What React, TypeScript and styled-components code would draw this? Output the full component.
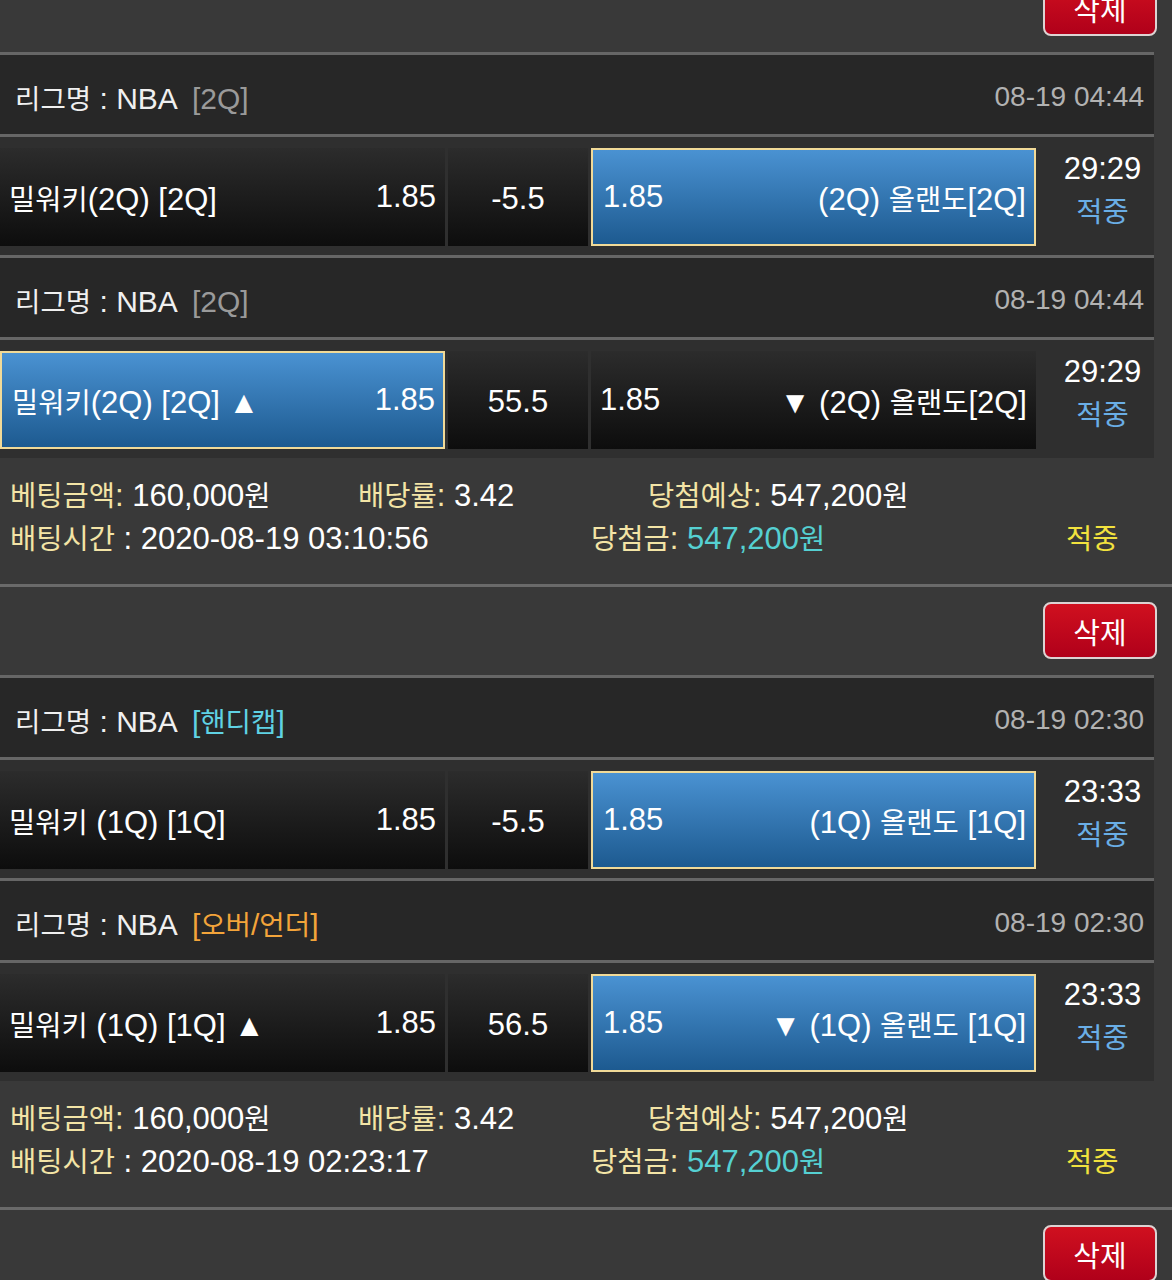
import React, { FC } from 'react';
import styled, { createGlobalStyle } from 'styled-components';

const GlobalStyle = createGlobalStyle`
    html, body {
        margin: 0;
        padding: 0;
        background: #393939;
    }
    body {
        font-family: 'Liberation Sans', 'Noto Sans CJK KR', Arial, sans-serif;
        color: #f2f2f2;
    }
`;

type Tone = 'gray' | 'cyan' | 'orange';

interface ISide {
    name: string;
    odds: string;
    selected?: boolean;
}

interface IGame {
    tag: string;
    tone: Tone;
    date: string;
    home: ISide;
    line: string;
    away: ISide;
    clock: string;
}

interface IBet {
    games: IGame[];
    amount: string;
    rate: string;
    expected: string;
    time: string;
    won: string;
}

const toneColors: Record<Tone, string> = {
    gray: '#9a9a9a',
    cyan: '#5fd2e4',
    orange: '#f3a43a',
};

const Hangul = styled.span`
    font-size: 0.92em;
`;

const Ko: FC<{ text: string }> = ({ text }) => (
    <>
        {text
            .split(/([\uAC00-\uD7A3]+)/)
            .map((part, i) => (i % 2 ? <Hangul key={i}>{part}</Hangul> : part))}
    </>
);

const Page = styled.div`
    margin-top: -36px;
    overflow: hidden;
`;

const DeleteBar = styled.div`
    display: flex;
    justify-content: flex-end;
    padding: 15px 15px 16px;
`;

const DeleteButton = styled.button`
    width: 114px;
    height: 57px;
    border: 2px solid #ddd3d3;
    border-radius: 8px;
    background: linear-gradient(#d0101f, #b0001a);
    color: #ffffff;
    font-family: inherit;
    font-size: 29px;
    padding: 0;
    cursor: pointer;
`;

const FullLine = styled.div`
    height: 3px;
    background: #6a6a6a;
`;

const BetBox = styled.div`
    width: 1154px;
`;

const GameHeader = styled.div`
    display: flex;
    align-items: center;
    justify-content: space-between;
    height: 82px;
    padding: 4px 10px 0 15px;
    box-sizing: border-box;
    border-top: 3px solid #666666;
    background: #272727;
    font-size: 30px;
`;

const League = styled.span`
    color: #f0f0f0;
`;

const Tag = styled.span<{ $tone: Tone }>`
    margin-left: 14px;
    color: ${({ $tone }) => toneColors[$tone]};
`;

const DateText = styled.span`
    font-size: 28px;
    color: #b2b2b2;
`;

const MatchRow = styled.div`
    display: grid;
    grid-template-columns: 445px 140px 445px 1fr;
    column-gap: 3px;
    padding: 11px 0 9px;
    border-top: 3px solid #666666;
    background: #2f2f2f;
`;

const Pick = styled.div<{ $selected?: boolean }>`
    display: flex;
    align-items: center;
    justify-content: space-between;
    height: 98px;
    box-sizing: border-box;
    padding: ${({ $selected }) => ($selected ? '0 8px 0 10px' : '0 9px')};
    font-size: 31px;
    color: #ffffff;
    white-space: nowrap;
    border: ${({ $selected }) => ($selected ? '2px solid #f1da98' : 'none')};
    background: ${({ $selected }) =>
        $selected
            ? 'linear-gradient(#4a92d2, #1d5a90)'
            : 'linear-gradient(#2c2c2c, #0d0d0d)'};
`;

const LineCell = styled.div`
    display: flex;
    align-items: center;
    justify-content: center;
    height: 98px;
    padding-top: 4px;
    box-sizing: border-box;
    font-size: 31px;
    color: #ffffff;
    background: linear-gradient(#2c2c2c, #0d0d0d);
`;

const TimeCell = styled.div`
    display: flex;
    flex-direction: column;
    align-items: center;
    justify-content: center;
    height: 98px;
    padding: 0 0 14px 12px;
    box-sizing: border-box;
    font-size: 31px;
    line-height: 43px;
`;

const Clock = styled.span`
    color: #ffffff;
`;

const Hit = styled.span<{ $color: string }>`
    color: ${({ $color }) => $color};
`;

const Info = styled.div`
    padding: 14px 0 26px 10px;
    font-size: 31px;
`;

const InfoRow = styled.div`
    display: flex;
    align-items: center;
    height: 43px;
    white-space: nowrap;
`;

const InfoItem = styled.div<{ $width?: number }>`
    ${({ $width }) => ($width ? `width: ${$width}px;` : 'flex: 1;')}
`;

const Label = styled.span`
    color: #f3e4a6;
`;

const Value = styled.span<{ $cyan?: boolean }>`
    color: ${({ $cyan }) => ($cyan ? '#55d0d2' : '#ffffff')};
`;

const bets: IBet[] = [
    {
        games: [
            {
                tag: '[2Q]',
                tone: 'gray',
                date: '08-19 04:44',
                home: { name: '밀워키(2Q) [2Q]', odds: '1.85' },
                line: '-5.5',
                away: { name: '(2Q) 올랜도[2Q]', odds: '1.85', selected: true },
                clock: '29:29',
            },
            {
                tag: '[2Q]',
                tone: 'gray',
                date: '08-19 04:44',
                home: { name: '밀워키(2Q) [2Q] ▲', odds: '1.85', selected: true },
                line: '55.5',
                away: { name: '▼ (2Q) 올랜도[2Q]', odds: '1.85' },
                clock: '29:29',
            },
        ],
        amount: '160,000원',
        rate: '3.42',
        expected: '547,200원',
        time: '2020-08-19 03:10:56',
        won: '547,200원',
    },
    {
        games: [
            {
                tag: '[핸디캡]',
                tone: 'cyan',
                date: '08-19 02:30',
                home: { name: '밀워키 (1Q) [1Q]', odds: '1.85' },
                line: '-5.5',
                away: { name: '(1Q) 올랜도 [1Q]', odds: '1.85', selected: true },
                clock: '23:33',
            },
            {
                tag: '[오버/언더]',
                tone: 'orange',
                date: '08-19 02:30',
                home: { name: '밀워키 (1Q) [1Q] ▲', odds: '1.85' },
                line: '56.5',
                away: { name: '▼ (1Q) 올랜도 [1Q]', odds: '1.85', selected: true },
                clock: '23:33',
            },
        ],
        amount: '160,000원',
        rate: '3.42',
        expected: '547,200원',
        time: '2020-08-19 02:23:17',
        won: '547,200원',
    },
];

const Delete: FC = () => (
    <DeleteBar>
        <DeleteButton>삭제</DeleteButton>
    </DeleteBar>
);

const Game: FC<{ game: IGame }> = ({ game }) => (
    <>
        <GameHeader>
            <span>
                <League>
                    <Ko text="리그명 : NBA" />
                </League>
                <Tag $tone={game.tone}>
                    <Ko text={game.tag} />
                </Tag>
            </span>
            <DateText>{game.date}</DateText>
        </GameHeader>
        <MatchRow>
            <Pick $selected={game.home.selected}>
                <span>
                    <Ko text={game.home.name} />
                </span>
                <span>{game.home.odds}</span>
            </Pick>
            <LineCell>{game.line}</LineCell>
            <Pick $selected={game.away.selected}>
                <span>{game.away.odds}</span>
                <span>
                    <Ko text={game.away.name} />
                </span>
            </Pick>
            <TimeCell>
                <Clock>{game.clock}</Clock>
                <Hit $color="#6aaee6">
                    <Ko text="적중" />
                </Hit>
            </TimeCell>
        </MatchRow>
    </>
);

const Bet: FC<{ bet: IBet }> = ({ bet }) => (
    <>
        <BetBox>
            {bet.games.map((g, i) => (
                <Game key={i} game={g} />
            ))}
        </BetBox>
        <Info>
            <InfoRow>
                <InfoItem $width={348}>
                    <Label>
                        <Ko text="베팅금액:" />
                    </Label>{' '}
                    <Value>
                        <Ko text={bet.amount} />
                    </Value>
                </InfoItem>
                <InfoItem $width={290}>
                    <Label>
                        <Ko text="배당률:" />
                    </Label>{' '}
                    <Value>{bet.rate}</Value>
                </InfoItem>
                <InfoItem>
                    <Label>
                        <Ko text="당첨예상:" />
                    </Label>{' '}
                    <Value>
                        <Ko text={bet.expected} />
                    </Value>
                </InfoItem>
            </InfoRow>
            <InfoRow>
                <InfoItem $width={581}>
                    <Label>
                        <Ko text="배팅시간" />
                    </Label>{' '}
                    <Value>: {bet.time}</Value>
                </InfoItem>
                <InfoItem $width={475}>
                    <Label>
                        <Ko text="당첨금:" />
                    </Label>{' '}
                    <Value $cyan>
                        <Ko text={bet.won} />
                    </Value>
                </InfoItem>
                <InfoItem>
                    <Hit $color="#f2e23e">
                        <Ko text="적중" />
                    </Hit>
                </InfoItem>
            </InfoRow>
        </Info>
        <FullLine />
        <Delete />
    </>
);

const App: FC = () => (
    <>
        <GlobalStyle />
        <Page>
            <Delete />
            {bets.map((b, i) => (
                <Bet key={i} bet={b} />
            ))}
        </Page>
    </>
);

export default App;
